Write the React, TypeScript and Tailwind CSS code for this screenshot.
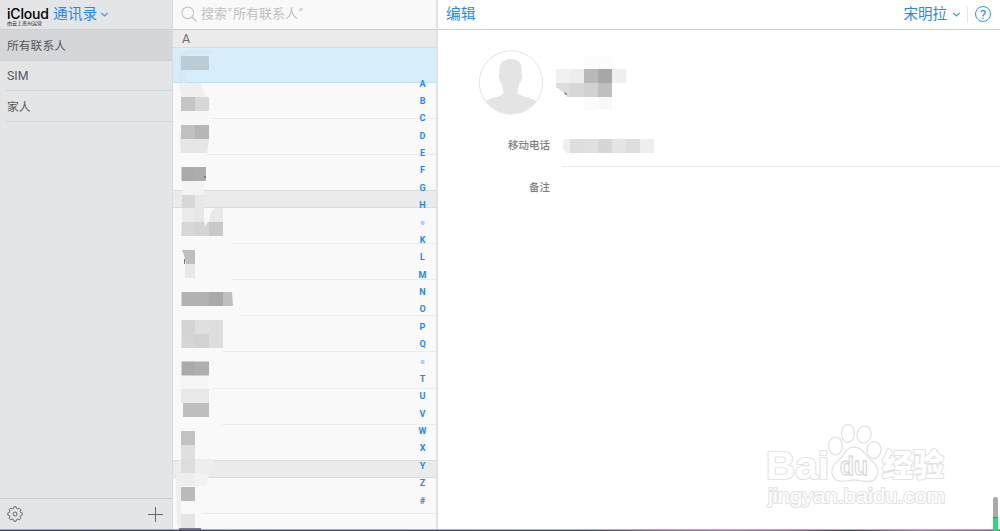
import clsx from 'clsx'

const GROUPS = ['所有联系人', 'SIM', '家人']

const LETTERS = ['A', 'B', 'C', 'D', 'E', 'F', 'G', 'H', '•', 'K', 'L', 'M', 'N', 'O', 'P', 'Q', '•', 'T', 'U', 'V', 'W', 'X', 'Y', 'Z', '#']

// x, y, width, height, colour of each block that hides a name in the list
type Block = [number, number, number, number, string]

const BLOCKS: Block[] = [
  [8, 26, 14, 14, '#bacdd7'], [22, 26, 14, 14, '#bccbd4'],
  [8, 67, 14, 14, '#c5c5c5'], [22, 67, 14, 14, '#d7d7d7'],
  [8, 95, 14, 14, '#c0c0c0'], [22, 95, 14, 14, '#b6b6b6'],
  [8.5, 137, 13.5, 14, '#aaaaaa'], [22, 137, 11, 14, '#adadad'],
  [9, 151, 22, 14, '#f3f3f3'],
  [9, 165, 13, 13, '#d7d7d7'], [22, 165, 9, 13, '#e8e8e8'],
  [9, 178, 13, 14, '#ebebeb'], [22, 178, 9, 14, '#e7e7e7'],
  [8.5, 192, 13.5, 14, '#d7d7d7'], [22, 192, 14, 14, '#d3d3d3'], [36, 192, 14, 14, '#c9c9c9'],
  [12, 234, 10, 14, '#e8e8e8'],
  [8.5, 262, 13.5, 14, '#b2b2b2'], [22, 262, 14, 14, '#b1b1b1'], [36, 262, 14, 14, '#aaaaaa'],
  [8.5, 290, 13.5, 14, '#d4d4d4'], [22, 290, 14, 14, '#dfdfdf'], [36, 290, 14, 28, '#dddddd'],
  [8.5, 304, 13.5, 14, '#d5d5d5'], [22, 304, 14, 14, '#d2d2d2'],
  [8.5, 331.5, 13.5, 14, '#aaaaaa'], [22, 331.5, 14, 14, '#aeaeae'],
  [8, 359, 28, 14, '#e8e8e8'], [10, 373, 26, 14, '#bebebe'],
  [8, 401, 14, 14, '#c3c3c3'], [8, 415, 14, 14, '#dfdfdf'], [8, 429, 14, 14, '#dcdddd'],
  [8, 457, 14, 14, '#bababa'], [8, 484, 14, 15, '#e5e5e5'],
]

const PROFILE_BLOCKS: Block[] = [
  [36, 6, 28, 14, '#fcfcfc'],
  [8, 19, 14, 14, '#f1f1f1'], [22, 19, 14, 14, '#ededed'], [36, 19, 14, 14, '#b8b8b8'], [50, 19, 14, 14, '#a7a7a7'], [64, 19, 14, 14, '#efefef'],
  [22, 33, 14, 14, '#d7d7d7'], [36, 33, 14, 14, '#d1d1d1'], [50, 33, 14, 14, '#bfbfbf'],
  [36, 47, 14, 14, '#fbfbfb'], [50, 47, 14, 12, '#f8f8f8'],
]

const PHONE_BLOCKS: Block[] = [
  [8, 0, 14, 14, '#dddddd'], [22, 0, 14, 14, '#e0e0e0'], [36, 0, 14, 14, '#d6d6d6'],
  [50, 0, 14, 14, '#e4e4e4'], [64, 0, 14, 14, '#dddddd'], [78, 0, 14, 14, '#eeeeee'],
]

function Blocks({ items }: { items: Block[] }) {
  return (
    <>
      {items.map(([x, y, w, h, fill], i) => (
        <rect key={i} x={x} y={y} width={w} height={h} fill={fill} />
      ))}
    </>
  )
}

function Chevron() {
  return (
    <svg className="h-[7px] w-[9px]" viewBox="0 0 9 7" fill="none" stroke="#3b9cf8" strokeWidth="1.2">
      <path d="M1.3 2 4.5 5 7.7 2" />
    </svg>
  )
}

function Gear() {
  return (
    <svg className="size-4" viewBox="0 0 16 16" fill="none" stroke="#66696d" strokeWidth="1">
      <path d="M6.9 .8h2.2l.4 1.6 1.3.6 1.5-.9 1.6 1.6-.9 1.5.6 1.3 1.6.4v2.2l-1.6.4-.6 1.3.9 1.5-1.6 1.6-1.5-.9-1.3.6-.4 1.6H6.9l-.4-1.6-1.3-.6-1.5.9-1.6-1.6.9-1.5-.6-1.3-1.6-.4V6.9l1.6-.4.6-1.3-.9-1.5 1.6-1.6 1.5.9 1.3-.6z" strokeLinejoin="round" />
      <circle cx="8" cy="8" r="2" />
    </svg>
  )
}

function Row({ inset, selected, tall }: { inset: string; selected?: boolean; tall?: boolean }) {
  return (
    <div className={clsx('flex shrink-0 items-end', selected ? 'h-[35px] bg-[#d7edfa]' : tall ? 'h-[37px]' : 'h-9')}>
      <div className={clsx('h-px flex-1', inset, selected ? 'bg-[#bfe1f3]' : 'bg-[#ececec]')} />
    </div>
  )
}

function Section({ label }: { label?: string }) {
  return (
    <div className={clsx('h-[18px] shrink-0 border-b border-[#dcdcdc] bg-[#ebebeb] pl-[9px] text-[12.5px] leading-[17px] font-normal text-[#6b6b6b]', !label && 'border-t')}>
      {label}
    </div>
  )
}

function Sidebar() {
  return (
    <aside className="flex w-[172px] shrink-0 flex-col bg-[#e4e5e7]">
      <header className="flex h-[30px] shrink-0 border-b border-[#c0d1dc] pl-[7px]">
        <div className="w-[46px] pt-[7px]">
          <div className="font-[Inter] text-[14px] leading-[14px] font-medium tracking-[-0.2px] text-black">iCloud</div>
          <div className="text-[5px] leading-[5px] font-normal whitespace-nowrap text-[#222]">由云上贵州运营</div>
        </div>
        <div className="flex h-[29px] items-center gap-[3px] text-[14.7px] font-normal text-[#1e88fb]">
          通讯录
          <Chevron />
        </div>
      </header>
      <nav className="flex-1">
        {GROUPS.map((name, i) => (
          <div
            key={name}
            className={clsx(
              'font-normal text-[#55575b]',
              i === 0 ? 'h-[31px] border-b border-[#cccdd0] bg-[#d5d6da] pl-[7px] text-[11.8px] leading-[32px]' : 'ml-[6px] border-b border-[#d3d5d7] pl-px',
              i === 1 && 'h-[30px] text-[12.3px] leading-[30px]',
              i === 2 && 'h-[31px] text-[11.8px] leading-[33px]'
            )}
          >
            {name}
          </div>
        ))}
      </nav>
      <footer className="flex h-8 shrink-0 items-center justify-between border-t border-[#cbcdd0] pr-[9px] pb-[2px] pl-[7px]">
        <Gear />
        <svg className="size-4" viewBox="0 0 16 16" stroke="#66696d" strokeWidth="1">
          <path d="M8.5 1v15M1 8.5h15" />
        </svg>
      </footer>
    </aside>
  )
}

function ContactList() {
  return (
    <section className="relative flex w-[266px] shrink-0 flex-col overflow-hidden border-r-2 border-l border-r-[#e2e2e2] border-l-[#d9dcdd] bg-[#f9f9f9]">
      <header className="flex h-[30px] shrink-0 items-center gap-1 border-b border-[#c0d1dc] pb-[2px] pl-2 text-[13px] font-normal text-[#c0c0c0]">
        <svg className="size-4" viewBox="0 0 16 16" fill="none" stroke="#c0c0c0" strokeWidth="1.1">
          <circle cx="6.8" cy="6.8" r="5.8" />
          <path d="m11 11 4.5 4.5" />
        </svg>
        <span className="flex whitespace-nowrap">
          搜索<span className="w-[6px] italic">"</span>所有联系人<span className="w-[6px] italic">"</span>
        </span>
      </header>
      <Section label="A" />
      <Row inset="ml-0" selected />
      <Row inset="ml-[38px]" />
      <Row inset="ml-[34px]" />
      <div className="h-[35px] shrink-0" />
      <Section />
      <Row inset="ml-[59px]" />
      <Row inset="ml-[59px]" />
      <Row inset="ml-[68px]" />
      <Row inset="ml-[49px]" />
      <Row inset="ml-[39px]" tall />
      <Row inset="ml-[49px]" />
      <div className="h-[35px] shrink-0" />
      <Section />
      <Row inset="ml-[29px]" />

      {/* blurred-out names */}
      <svg className="absolute top-[30px] left-0 h-[501px] w-[70px]" viewBox="0 0 70 501">
        <path d="M6 36V25q4-5 14-5h20l-5 4H13v36H7z" fill="#d4e8f2" />
        <path d="M7 53h21q2 10 6 14h-26z" fill="#eeefef" />
        <path d="M8 81h27v14H8z" fill="#f7f7f7" />
        <path d="M6 97l2 26h26l2-14H8z" fill="#e6e6e6" />
        <path d="M36 192q1-12 6-14h8v14z" fill="#e9e9e9" />
        <path d="M3 444q-2-13 5-15h34q-1 4-6 14-1 13-7 13H8v42l-4-1z" fill="#eeeeef" />
        <path d="M6 362q0-25 9-27h18l3 24H8z" fill="#f6f6f6" />
        <path d="M22 443h14l-3 11q-1 2-11 2z" fill="#f2f2f2" />
        <Blocks items={BLOCKS} />
        <path d="M9 220h13v14h-9l-2-9z" fill="#bfbfbf" />
        <path d="M50 262h9l1 14H50z" fill="#bfbfbf" />
        <path d="M31 146h2v2h-2zM11 229h1v5h-1zM32 192h1v1h-1z" fill="#777" />
        <path d="M31 191l4 1-3 5z" fill="#f3f3f3" />
        <path d="M6 498h22v3H6z" fill="#7d7988" />
      </svg>

      <div className="absolute top-[75.5px] right-[5.5px] flex w-4 flex-col text-center font-[Roboto] text-[9px] font-bold text-[#1e88fb]">
        {LETTERS.map((l, i) => (
          <span key={i} className={clsx('h-[17.375px]', l === '•' ? "font-['Liberation_Sans'] text-[14px] leading-[16px] text-[#a9d0fb]" : 'leading-[17.375px]')}>
            {l}
          </span>
        ))}
      </div>
    </section>
  )
}

function Detail() {
  return (
    <main className="flex min-w-0 flex-1 flex-col bg-white">
      <header className="flex h-[30px] shrink-0 items-center border-b border-[#c0d1dc] pr-[9px] pl-2 text-[14.7px] font-normal text-[#1e88fb]">
        <span>编辑</span>
        <span className="ml-auto text-[14.5px]">宋明拉</span>
        <span className="ml-[5px]"><Chevron /></span>
        <span className="mr-[7px] ml-[6px] h-4 w-px bg-[#e5e5e5]" />
        <span className="mb-px flex size-4 items-center justify-center rounded-full border border-[#3492f7] font-[Roboto] text-[13px] leading-none font-normal">?</span>
      </header>

      <div className="flex pt-5 pl-[41px]">
        <svg className="h-[65px] w-[65px]" viewBox="0 0 65 65">
          <circle cx="32" cy="32.5" r="31.7" fill="#fff" stroke="#e4e4e4" />
          <path d="M6.5 51q5-3 11-4 7-2 7-4 0-4-2-10-2-1-3-7 1-1 1-3-1-9 4-12 8-4 15 0 4 3 3 12 0 2 1 3-1 6-3 7-2 7-2 10 1 2 8 4 6 1 11 4A32 32 0 0 1 6.5 51z" fill="#e4e4e4" />
        </svg>
        <svg className="ml-1 h-[65px] w-[80px]" viewBox="0 0 80 65">
          <Blocks items={PROFILE_BLOCKS} />
          <path d="M8 33h14v14h-3l-4-5-7-5z" fill="#dddddd" />
          <path d="M16 42l3 2-1 1z" fill="#444" />
        </svg>
      </div>

      <div className="flex h-[52px] w-full text-[10.5px] font-medium text-[#7e7e7e]">
        <span className="w-[112px] shrink-0 pt-[23px] text-right leading-4">移动电话</span>
        <div className="ml-3 flex-1 border-b border-[#ececec] pt-6">
          <svg className="h-[18px] w-[105px]" viewBox="0 0 105 18">
            <path d="M8 0H2Q-2 10 5 14h3z" fill="#eeeeee" />
            <Blocks items={PHONE_BLOCKS} />
          </svg>
        </div>
      </div>
      <div className="w-[112px] pt-[13px] text-right text-[10.5px] leading-4 font-medium text-[#7e7e7e]">备注</div>
    </main>
  )
}

function Watermark() {
  return (
    <svg className="absolute top-[420px] left-[762px] h-[94px] w-[190px]" viewBox="0 0 190 94" fill="#fff" stroke="#e3e3e3" strokeWidth="1.3" strokeLinejoin="round">
      <g strokeWidth="2.2" paintOrder="stroke">
        <text x="4" y="59" fontFamily="Liberation Sans" fontWeight="bold" fontSize="38" textLength="63" lengthAdjust="spacingAndGlyphs">Bai</text>
        <text x="120" y="56" fontFamily="Noto Sans CJK SC" fontWeight="900" fontSize="31" textLength="62" lengthAdjust="spacingAndGlyphs">经验</text>
        <text x="6" y="83" fontFamily="Liberation Sans" fontSize="21" textLength="177" lengthAdjust="spacingAndGlyphs">jingyan.baidu.com</text>
      </g>
      <ellipse cx="73.5" cy="26" rx="7" ry="8.8" />
      <ellipse cx="86" cy="13.5" rx="6.5" ry="9" />
      <ellipse cx="102" cy="14.5" rx="7" ry="8.7" transform="rotate(12 102 14.5)" />
      <ellipse cx="112" cy="30" rx="7" ry="8.5" />
      <path d="M92 27c-8 0-10 9-16 14-6 4-8 12-4 17 5 6 14 2 21 2s15 4 20-1c5-6 3-13-3-18-7-5-9-14-18-14z" />
      <text x="78" y="55" fontFamily="Liberation Sans" fontWeight="bold" fontSize="25" textLength="28" lengthAdjust="spacingAndGlyphs" stroke="#d9d9d9">du</text>
    </svg>
  )
}

export default function App() {
  return (
    <div className="relative flex h-[531px] w-[1000px] flex-col overflow-hidden bg-white font-['Roboto','Noto_Sans_CJK_SC',sans-serif] font-light">
      <div className="flex min-h-0 flex-1">
        <Sidebar />
        <ContactList />
        <Detail />
      </div>
      <div className="h-px shrink-0 bg-linear-[90deg,#42435e_0%,#454b70_58%,#ad75af_72%,#9a63a2_78%,#41415b_85%,#b672b4_92%,#82528e_100%]" />
      <div className="absolute bottom-px left-0 h-px w-full bg-[#62628b]/50" />
      <Watermark />
      <div className="absolute right-[2px] bottom-0 flex h-[34px] w-[5px] flex-col overflow-hidden rounded-t-full bg-[#a9a9a9]">
        <div className="mt-5 flex-1 border-t border-[#15a952] bg-[#2ed573]" />
      </div>
    </div>
  )
}
